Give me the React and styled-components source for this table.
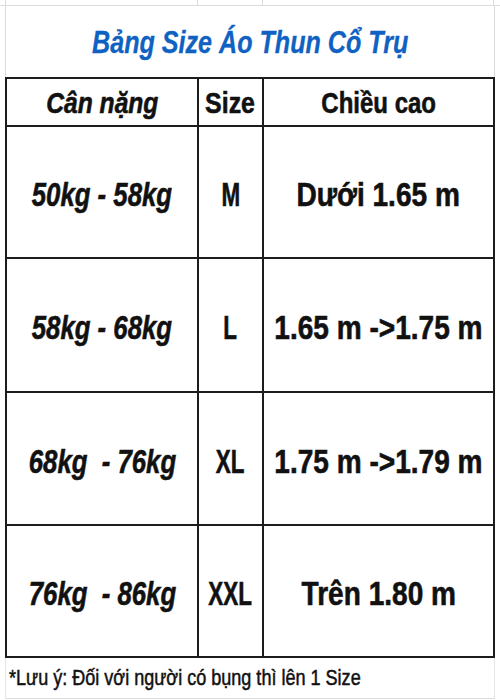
import { Fragment } from 'react';
import styled, { createGlobalStyle } from 'styled-components';

const GlobalStyle = createGlobalStyle`
  html, body {
    margin: 0;
    padding: 0;
    background: #ffffff;
  }
  body {
    font-family: 'Liberation Sans', Arial, sans-serif;
    color: #111111;
  }
`;

const Page = styled.div`
  width: 500px;
  height: 700px;
  overflow: hidden;
  background: #ffffff;
  display: flex;
  flex-direction: column;
`;

const TopStrip = styled.div`
  display: grid;
  grid-template-columns: 6px 192px 65px 231px 1fr;
  height: 5px;
  border-bottom: 1px solid #dcdcdc;
`;

const StripCell = styled.div`
  border-right: ${p => (p.$last ? 'none' : '1px solid #dcdcdc')};
`;

const Sheet = styled.div`
  margin-left: 5px;
  width: 490px;
  display: flex;
  flex-direction: column;
`;

const TitleRow = styled.div`
  height: 71px;
  display: flex;
  align-items: center;
  justify-content: center;
  border-left: 1px solid #dcdcdc;
  border-right: 1px solid #dcdcdc;
  box-sizing: border-box;
  padding-top: 2px;
`;

const Squeeze = styled.span`
  display: inline-block;
  white-space: pre;
  transform: scaleX(${p => p.$sx});
  transform-origin: ${p => p.$origin || 'center'} center;
`;

const Title = styled(Squeeze)`
  font-size: 31px;
  font-weight: bold;
  font-style: italic;
  color: #0f62c2;
  -webkit-text-stroke: 0.3px #0f62c2;
`;

const Grid = styled.div`
  display: grid;
  grid-template-columns: 190px 63px 229px;
  grid-template-rows: 46px 130px 132px 131px 130px;
  gap: 2px;
  padding: 2px;
  background: #1c1c1c;
`;

const Cell = styled.div`
  background: #ffffff;
  display: flex;
  align-items: center;
  justify-content: center;
  padding-top: ${p => (p.$head ? '2px' : '6px')};
  box-sizing: border-box;
  font-size: ${p => (p.$head ? '30px' : '33px')};
  font-weight: bold;
  font-style: ${p => (p.$italic ? 'italic' : 'normal')};
  color: #111111;
  -webkit-text-stroke: 0.6px #111111;
`;

const NoteRow = styled.div`
  height: 41px;
  display: flex;
  align-items: center;
  padding-left: 3px;
  border-left: 1px solid #e4e4e4;
  border-right: 1px solid #e4e4e4;
  border-bottom: 1px solid #dcdcdc;
  box-sizing: border-box;
  font-size: 22px;
  color: #111111;
  -webkit-text-stroke: 0.5px #111111;
`;

const rows = [
  { weight: '50kg - 58kg', size: 'M', height: 'Dưới 1.65 m' },
  { weight: '58kg - 68kg', size: 'L', height: '1.65 m ->1.75 m' },
  { weight: '68kg  - 76kg', size: 'XL', height: '1.75 m ->1.79 m' },
  { weight: '76kg  - 86kg', size: 'XXL', height: 'Trên 1.80 m' },
];

export default function App() {
  return (
    <Page>
      <GlobalStyle />
      <TopStrip>
        <StripCell />
        <StripCell />
        <StripCell />
        <StripCell />
        <StripCell $last />
      </TopStrip>
      <Sheet>
        <TitleRow>
          <Title $sx={0.81}>Bảng Size Áo Thun Cổ Trụ</Title>
        </TitleRow>
        <Grid>
          <Cell $head $italic>
            <Squeeze $sx={0.82}>Cân nặng</Squeeze>
          </Cell>
          <Cell $head>
            <Squeeze $sx={0.83}>Size</Squeeze>
          </Cell>
          <Cell $head>
            <Squeeze $sx={0.8}>Chiều cao</Squeeze>
          </Cell>
          {rows.map(r => (
            <Fragment key={r.size}>
              <Cell $italic>
                <Squeeze $sx={0.78}>{r.weight}</Squeeze>
              </Cell>
              <Cell>
                <Squeeze $sx={0.68}>{r.size}</Squeeze>
              </Cell>
              <Cell>
                <Squeeze $sx={0.85}>{r.height}</Squeeze>
              </Cell>
            </Fragment>
          ))}
        </Grid>
        <NoteRow>
          <Squeeze $sx={0.82} $origin="left">*Lưu ý: Đối với người có bụng thì lên 1 Size</Squeeze>
        </NoteRow>
      </Sheet>
    </Page>
  );
}
